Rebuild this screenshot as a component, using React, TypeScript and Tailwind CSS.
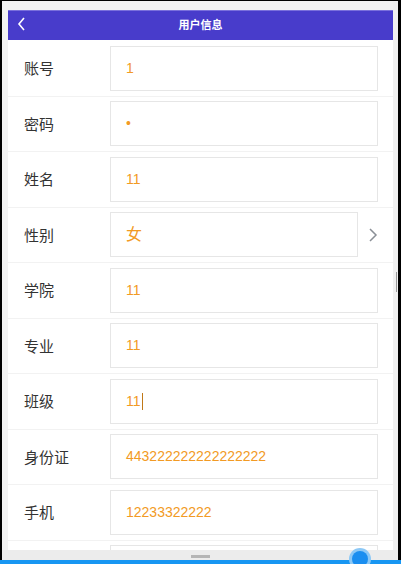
import React from "react";

const rows: { label: string; value: string; select?: boolean; caret?: boolean }[] = [
  { label: "账号", value: "1" },
  { label: "密码", value: "•" },
  { label: "姓名", value: "11" },
  { label: "性别", value: "女", select: true },
  { label: "学院", value: "11" },
  { label: "专业", value: "11" },
  { label: "班级", value: "11", caret: true },
  { label: "身份证", value: "443222222222222222" },
  { label: "手机", value: "12233322222" },
  { label: "", value: "" },
];

function Row({ label, value, select, caret }: (typeof rows)[number]) {
  return (
    <div className="flex h-[55.5px] shrink-0 items-center border-b border-[#f2f2f2] bg-white">
      <div className="w-[102px] pl-4 pt-[2px] text-[15px] text-[#333]">{label}</div>
      <div className={`flex h-[45px] items-center border border-[#e6e6e6] pl-[15px] text-[14px] text-[#f29a24] ${select ? "w-[248px]" : "w-[268px]"}`}>
        <span className={select ? "text-[16px]" : ""}>{value}</span>
        {caret && <span className="ml-[1px] h-[17px] w-px bg-[#c07818]" />}
      </div>
      {select && (
        <svg width="10" height="16" viewBox="0 0 10 16" className="ml-[10px]">
          <path d="M2 2l6 6-6 6" fill="none" stroke="#8a8f96" strokeWidth="1.5" />
        </svg>
      )}
    </div>
  );
}

export default function App() {
  return (
    <div
      className="relative flex h-[564px] w-[401px] flex-col overflow-hidden bg-black"
      style={{ fontFamily: '"Liberation Sans", "Noto Sans CJK SC", sans-serif' }}
    >
      <div className="mt-px flex h-[549px] bg-[#f2f2f2] ml-[2px] mr-[3px]">
        <div className="ml-[6px] flex w-[385px] flex-col overflow-hidden pt-[9px]">
          <div className="relative flex h-[30px] shrink-0 items-center justify-center border-t border-[#7a70dc] bg-[#483ccb]">
            <svg width="10" height="14" viewBox="0 0 10 14" className="absolute left-[9px] top-[6px]">
              <path d="M7 1L2 7l5 6" fill="none" stroke="#fff" strokeWidth="1.6" />
            </svg>
            <span className="text-[11px] font-bold text-white">用户信息</span>
          </div>
          <div className="h-[1px] shrink-0 bg-white" />
          {rows.map((r, i) => (
            <Row key={i} {...r} />
          ))}
        </div>
        <div className="flex w-[5px] flex-col bg-[#f0f0f0]">
          <div className="ml-[3px] mt-[271px] h-[20px] w-px bg-[#9a9a9a]" />
        </div>
      </div>
      <div className="ml-[2px] mr-[3px] flex h-[10px] justify-center bg-[#ececec]">
        <div className="mt-[5px] h-[3px] w-[19px] bg-[#b5b5b5]" />
      </div>
      <div className="h-[4px] bg-[#1896f2]" />
      <div className="absolute left-[349px] top-[548px] h-[22px] w-[22px] rounded-full bg-[#8cc8f6] p-[3px]">
        <div className="h-full w-full rounded-full bg-[#1a8ef0]" />
      </div>
    </div>
  );
}
